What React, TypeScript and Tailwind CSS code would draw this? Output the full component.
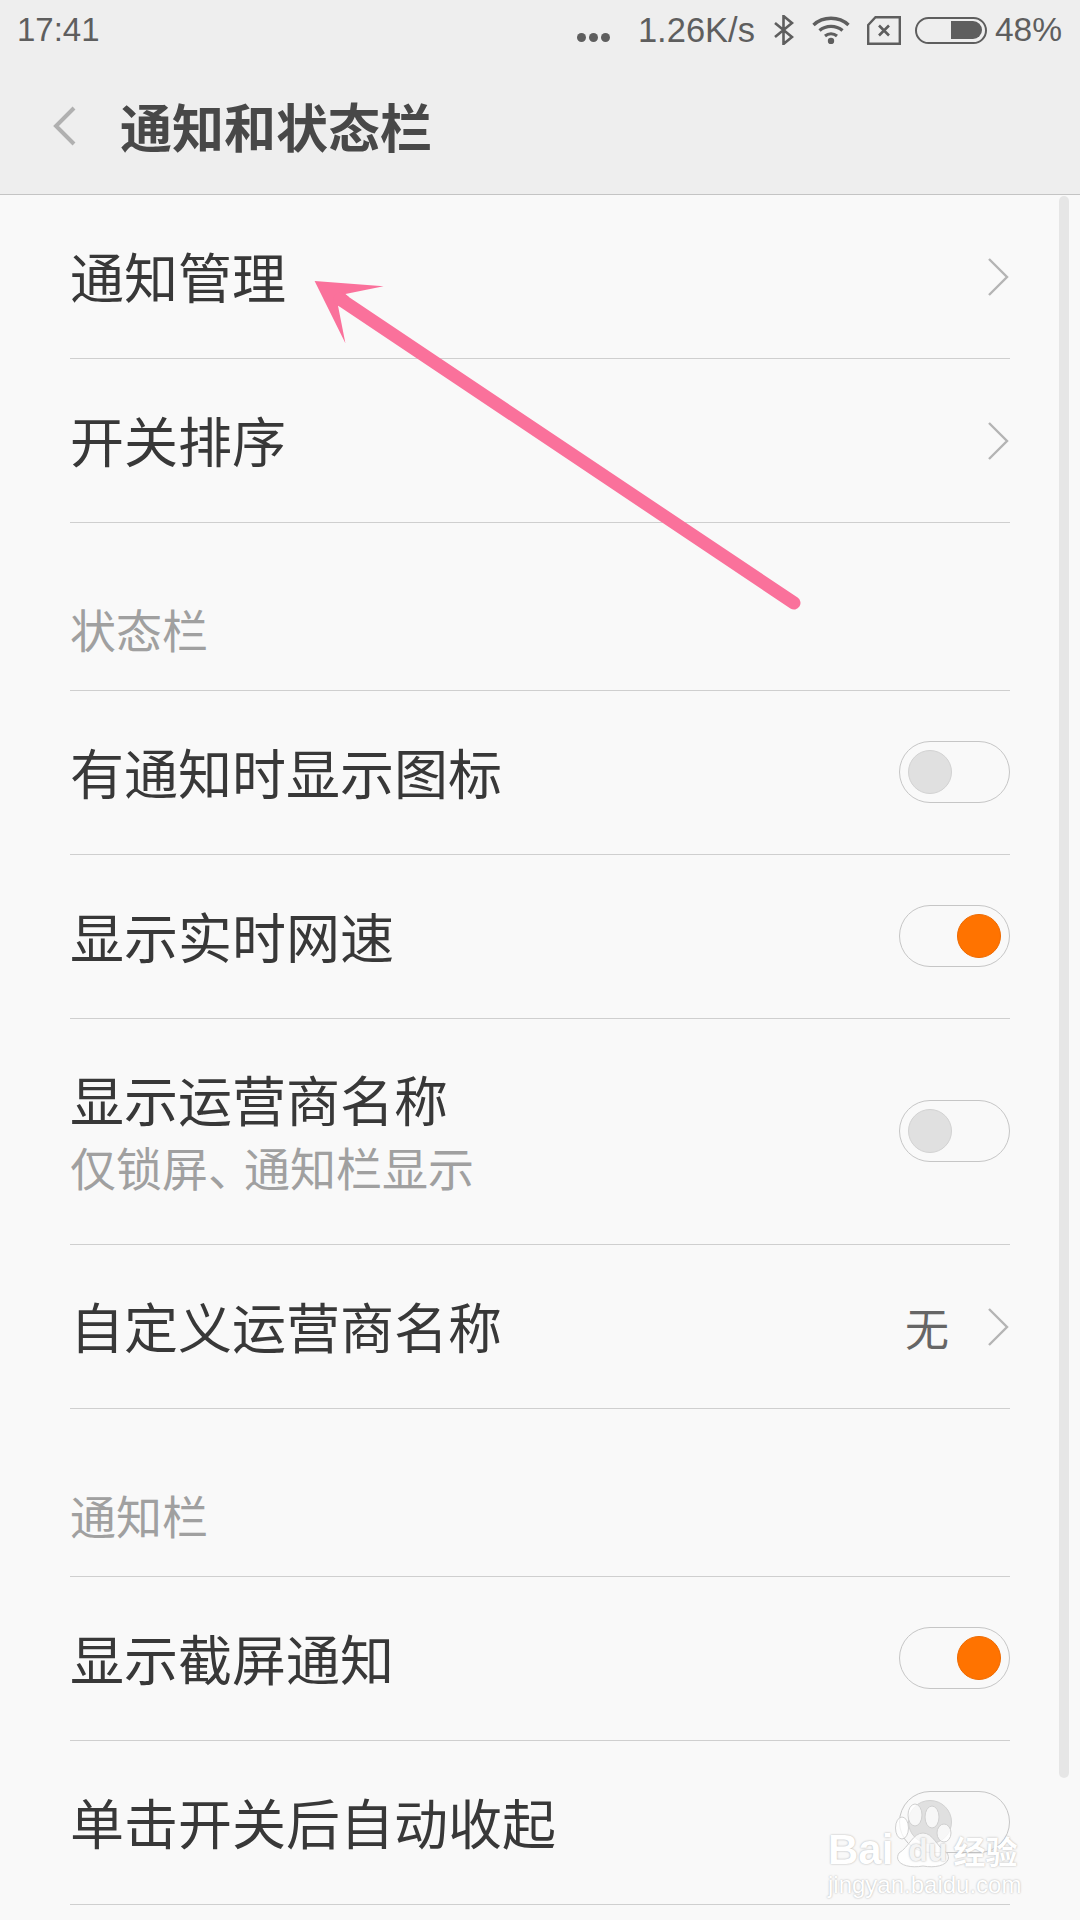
import { ReactNode } from "react";

const cjk = "font-['Noto_Sans_CJK_SC','Noto_Sans',sans-serif]";
const latin = "font-['Liberation_Sans',Arial,sans-serif]";

function Chevron() {
  return (
    <svg width="24" height="40" viewBox="0 0 24 40" fill="none" className="block">
      <path d="M3 2 L21 20 L3 38" stroke="#b4b4b4" strokeWidth="2.4" />
    </svg>
  );
}

function Toggle({ on }: { on: boolean }) {
  return (
    <div className={`mb-[2px] flex h-[62px] w-[111px] items-center rounded-full border border-[#c6c6c6] px-[8px] ${on ? "justify-end" : "justify-start"}`}>
      <div className={`h-[44px] w-[44px] rounded-full border ${on ? "border-[#ee6a00] bg-[#ff7300]" : "border-[#d2d2d2] bg-[#e0e0e0]"}`} />
    </div>
  );
}

function Row({ title, sub, right, tall }: { title: string; sub?: ReactNode; right: ReactNode; tall?: boolean }) {
  return (
    <div className={`flex items-center justify-between border-b border-[#cfcfcf] ${tall ? "h-[226px]" : "h-[164px]"}`}>
      <div className="flex flex-col pb-[2px]">
        <span className="text-[54px] leading-[68px] text-[#383838]">{title}</span>
        {sub && <span className="text-[46px] leading-[60px] pt-[3px] text-[#a0a0a0]">{sub}</span>}
      </div>
      {right}
    </div>
  );
}

function Section({ label }: { label: string }) {
  return (
    <div className="flex h-[168px] items-end border-b border-[#cfcfcf] pb-[32px]">
      <span className="text-[46px] leading-[60px] text-[#a0a0a0]">{label}</span>
    </div>
  );
}

function StatusBar() {
  return (
    <div className={`flex h-[50px] items-center justify-between pl-[17px] pr-[18px] pt-[10px] text-[34px] leading-[40px] text-[#5e5e5e] ${latin}`}>
      <span className="text-[33px]">17:41</span>
      <div className="flex items-center">
        <div className="mr-[28px] mt-[14px] flex gap-[3px]">
          <div className="h-[9px] w-[9px] rounded-full bg-[#5e5e5e]" />
          <div className="h-[9px] w-[9px] rounded-full bg-[#5e5e5e]" />
          <div className="h-[9px] w-[9px] rounded-full bg-[#5e5e5e]" />
        </div>
        <span className="text-[34.5px]">1.26K/s</span>
        <svg width="20" height="30" viewBox="0 0 20 30" fill="none" className="ml-[19px]">
          <path d="M1 8 L18 22 L9.5 29 L9.5 1 L18 8 L1 22" stroke="#5e5e5e" strokeWidth="2.6" />
        </svg>
        <svg width="38" height="28" viewBox="0 0 38 28" fill="none" className="ml-[18px]">
          <path d="M1.5 9 C11 0 27 0 36.5 9" stroke="#5e5e5e" strokeWidth="3.4" />
          <path d="M7.5 14.5 C14 9 24 9 30.5 14.5" stroke="#5e5e5e" strokeWidth="3.4" />
          <path d="M13 20 C16.5 17 21.5 17 25 20" stroke="#5e5e5e" strokeWidth="3" />
          <circle cx="19" cy="25" r="3.2" fill="#5e5e5e" />
        </svg>
        <svg width="34" height="29" viewBox="0 0 34 29" fill="none" className="ml-[17px]">
          <path d="M1.2 9 L8.5 1.2 H32.8 V27.8 H1.2 Z" stroke="#5e5e5e" strokeWidth="2.4" />
          <path d="M12 9.5 L22 19.5 M22 9.5 L12 19.5" stroke="#5e5e5e" strokeWidth="2.6" />
        </svg>
        <div className="ml-[14px] flex h-[27px] w-[72px] items-center justify-end rounded-full border-2 border-[#5e5e5e] pr-[3px]">
          <div className="h-[18px] w-[31px] rounded-r-full bg-[#5e5e5e]" />
        </div>
        <span className="ml-[8px] text-[33.5px]">48%</span>
      </div>
    </div>
  );
}

export default function App() {
  return (
    <div className={`relative h-[1920px] w-[1080px] overflow-hidden bg-[#f9f9f9] ${cjk}`}>
      <header className="h-[195px] border-b border-[#c4c4c4] bg-[#eeeeee]">
        <StatusBar />
        <div className="flex h-[144px] items-center pl-[53px] pt-[8px]">
          <svg width="24" height="40" viewBox="0 0 24 40" fill="none">
            <path d="M21 2 L3 20 L21 38" stroke="#b0b0b0" strokeWidth="4" />
          </svg>
          <h1 className="ml-[43px] text-[52px] font-bold leading-[60px] text-[#484848]">通知和状态栏</h1>
        </div>
      </header>

      <main className="px-[70px]">
        <Row title="通知管理" right={<Chevron />} />
        <Row title="开关排序" right={<Chevron />} />
        <Section label="状态栏" />
        <Row title="有通知时显示图标" right={<Toggle on={false} />} />
        <Row title="显示实时网速" right={<Toggle on />} />
        <Row
          title="显示运营商名称"
          sub={
            <>
              仅锁屏<span className="tracking-[-10px]">、</span>通知栏显示
            </>
          }
          tall
          right={<Toggle on={false} />}
        />
        <Row
          title="自定义运营商名称"
          right={
            <div className="flex items-center">
              <span className="text-[44px] text-[#666666]">无</span>
              <div className="ml-[37px]">
                <Chevron />
              </div>
            </div>
          }
        />
        <Section label="通知栏" />
        <Row title="显示截屏通知" right={<Toggle on />} />
        <Row title="单击开关后自动收起" right={<Toggle on={false} />} />
      </main>

      {/* scrollbar */}
      <div className="absolute left-[1059px] top-[196px] h-[1582px] w-[10px] rounded-full bg-[#e6e6e6]" />

      {/* pink annotation arrow */}
      <svg width="1080" height="1920" viewBox="0 0 1080 1920" fill="none" className="absolute left-0 top-0">
        <path d="M314.6 281 L383.6 286.3 L345.4 294 L349 297 L341 307 L337.9 305.3 L345.4 343.3 Z" fill="#fa719b" />
        <path d="M340 299 L794 603" stroke="#fa719b" strokeWidth="13" strokeLinecap="round" />
      </svg>

      {/* baidu watermark */}
      <div className={`absolute left-[828px] top-[1791px] w-[200px] text-white ${latin}`}>
        <svg width="57" height="76" viewBox="0 0 57 76" className="absolute left-[67px] top-[6px]">
          <g fill="#ffffff" fillOpacity="0.75" stroke="#d0d0d0" strokeWidth="1">
            <ellipse cx="7" cy="31" rx="6.5" ry="11" />
            <ellipse cx="20" cy="18" rx="7" ry="11" />
            <ellipse cx="37" cy="20" rx="7" ry="11" />
            <ellipse cx="49" cy="36" rx="7" ry="9" />
            <path d="M28 36 C38 36 42 50 52 56 C58 66 44 72 28 69 C12 72 -2 66 4 56 C14 50 18 36 28 36 Z" />
          </g>
        </svg>
        <div className="absolute left-0 top-[35px] flex items-center whitespace-nowrap text-[42px] font-bold leading-[48px] [text-shadow:0_0_2px_#a8a8a8]">
          <span>Bai</span>
          <span className="ml-[15px] text-[32px] text-[#f4f4f4]">du</span>
          <span className={`ml-[6px] text-[32px] ${cjk}`}>经验</span>
        </div>
        <div className="absolute left-0 top-[80px] whitespace-nowrap text-[24px] leading-[28px] [text-shadow:0_0_2px_#a8a8a8]">jingyan.baidu.com</div>
      </div>
    </div>
  );
}
